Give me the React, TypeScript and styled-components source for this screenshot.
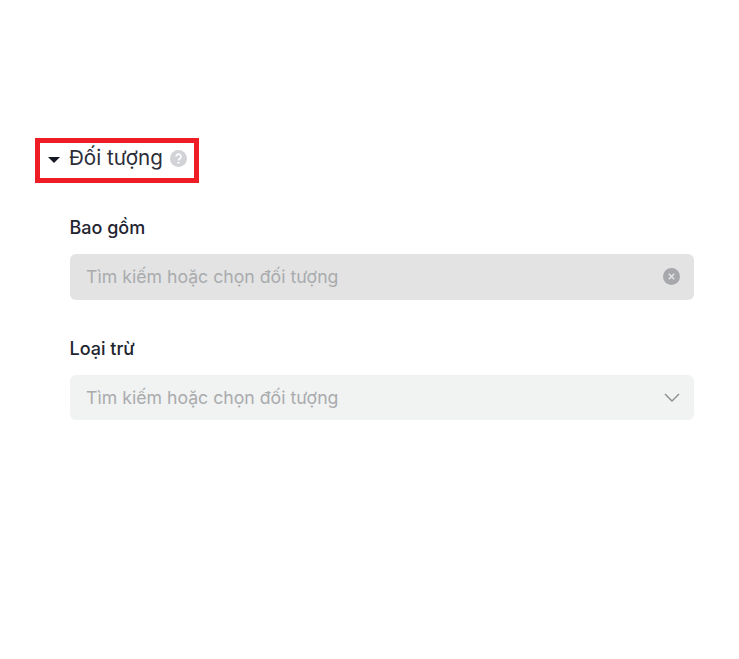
import React from "react";
import styled, { createGlobalStyle } from "styled-components";

const Global = createGlobalStyle`
  html, body { margin: 0; padding: 0; background: #fff; }
  body { font-family: Inter, "Noto Sans", "Liberation Sans", sans-serif; }
`;

const Page = styled.div`
  width: 739px;
  height: 659px;
  box-sizing: border-box;
  padding: 138px 45px 0 35px;
  overflow: hidden;
`;

const Highlight = styled.div`
  display: flex;
  align-items: center;
  box-sizing: border-box;
  width: 164px;
  height: 45px;
  border: 5px solid #ee1c25;
  padding: 0 0 5px 8px;
`;

const Caret = styled.span`
  width: 0;
  height: 0;
  border-left: 6px solid transparent;
  border-right: 6px solid transparent;
  border-top: 6px solid #161823;
  margin: 3px 9px 0 0;
`;

const Title = styled.span`
  font-size: 20.6px;
  line-height: 28px;
  color: #2b2d38;
  margin-right: 7px;
`;

const Fields = styled.div`
  display: flex;
  flex-direction: column;
  gap: 37px;
  padding: 33px 0 0 34.5px;
`;

const Field = styled.div`
  display: flex;
  flex-direction: column;
  gap: 14px;
`;

const Label = styled.div`
  font-size: 18px;
  font-weight: 500;
  line-height: 24px;
  color: #22242f;
`;

const Select = styled.div<{ $disabled?: boolean; $h: number }>`
  display: flex;
  align-items: center;
  justify-content: space-between;
  box-sizing: border-box;
  height: ${(p) => p.$h}px;
  padding: 0 14px 1px 16.5px;
  border-radius: 6px;
  background: ${(p) => (p.$disabled ? "#e3e3e4" : "#f1f2f2")};
  font-size: 17.7px;
  color: #a9abad;
`;

const Help = () => (
  <svg width="17" height="17" viewBox="0 0 16 16">
    <circle cx="8" cy="8" r="8" fill="#d2d3d6" />
    <path d="M5.7 6.2a2.3 2.3 0 1 1 3.5 2c-.8.5-1.2.8-1.2 1.6" fill="none" stroke="#fff" strokeWidth="1.5" />
    <circle cx="8" cy="12" r="1" fill="#fff" />
  </svg>
);

const Clear = () => (
  <svg width="17" height="17" viewBox="0 0 17 17">
    <circle cx="8.5" cy="8.5" r="8.5" fill="#a7a8ab" />
    <path d="M5.8 5.8l5.4 5.4M11.2 5.8l-5.4 5.4" stroke="#e3e3e4" strokeWidth="1.6" />
  </svg>
);

const Chevron = () => (
  <svg width="16" height="9" viewBox="0 0 16 9">
    <path d="M1 1l7 7 7-7" fill="none" stroke="#8a8c90" strokeWidth="1.4" />
  </svg>
);

export default function App() {
  return (
    <Page>
      <Global />
      <Highlight>
        <Caret />
        <Title>Đối tượng</Title>
        <Help />
      </Highlight>
      <Fields>
        <Field>
          <Label>Bao gồm</Label>
          <Select $disabled $h={46}>
            Tìm kiếm hoặc chọn đối tượng
            <Clear />
          </Select>
        </Field>
        <Field>
          <Label>Loại trừ</Label>
          <Select $h={45}>
            Tìm kiếm hoặc chọn đối tượng
            <Chevron />
          </Select>
        </Field>
      </Fields>
    </Page>
  );
}
